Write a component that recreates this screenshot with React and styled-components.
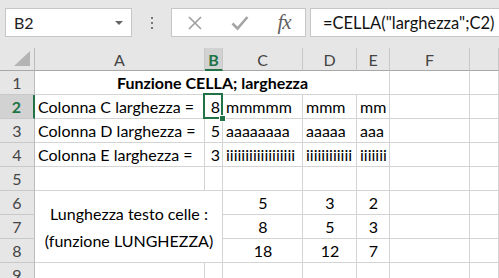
import React from "react";
import styled, { createGlobalStyle } from "styled-components";

const GlobalStyle = createGlobalStyle`
  html, body {
    margin: 0;
    padding: 0;
    background: #ffffff;
  }
  body {
    font-family: Lato, "Liberation Sans", sans-serif;
  }
`;

const Window = styled.div`
  width: 499px;
  height: 278px;
  overflow: hidden;
  background: #ffffff;
  display: flex;
  flex-direction: column;
`;

const FormulaBar = styled.div`
  height: 48px;
  flex: none;
  box-sizing: border-box;
  background: #e6e6e6;
  display: flex;
  align-items: center;
  padding-left: 5px;
  padding-bottom: 3px;
`;

const Box = styled.div`
  height: 29px;
  box-sizing: border-box;
  background: #ffffff;
  border: 1px solid #c6c6c6;
  display: flex;
  align-items: center;
`;

const NameBox = styled(Box)`
  width: 127px;
  padding: 0 8px 0 8px;
  justify-content: space-between;
  font-size: 16px;
  color: #222;
`;

const Caret = styled.span`
  width: 0;
  height: 0;
  border-left: 4px solid transparent;
  border-right: 4px solid transparent;
  border-top: 4px solid #666;
`;

const Dots = styled.div`
  width: 39px;
  display: flex;
  flex-direction: column;
  align-items: center;
  gap: 3px;
  span {
    width: 2px;
    height: 2px;
    background: #777;
  }
`;

const ButtonBox = styled(Box)`
  width: 135px;
  padding-left: 15px;
`;

const IconSlot = styled.div`
  width: ${p => p.$w}px;
  display: flex;
  justify-content: center;
  align-items: center;
`;

const Fx = styled.span`
  font-family: "Liberation Serif", serif;
  font-style: italic;
  font-size: 21px;
  color: #5f5f5f;
  letter-spacing: -1px;
`;

const FormulaInput = styled(Box)`
  flex: 1;
  margin-left: 4px;
  margin-right: -10px;
  padding-left: 12px;
  font-size: 16.5px;
  color: #111;
  white-space: nowrap;
`;

const Sheet = styled.div`
  display: grid;
  grid-template-columns: 35px 170px 18px 80px 54px 33px 80px 29px;
  grid-template-rows: 23px repeat(9, 24px);
  font-size: 16px;
  color: #000;
`;

const Corner = styled.div`
  background: #e6e6e6;
  border-right: 1px solid #bcbcbc;
  border-bottom: 1px solid #a8a8a8;
  display: flex;
  align-items: flex-end;
  justify-content: flex-end;
  padding: 0 4px 4px 0;
`;

const ColHead = styled.div`
  box-sizing: border-box;
  background: ${p => (p.$selected ? "#d2d2d2" : "#e6e6e6")};
  color: ${p => (p.$selected ? "#217346" : "#444")};
  font-weight: ${p => (p.$selected ? 700 : 400)};
  border-right: 1px solid #c8c8c8;
  border-bottom: ${p => (p.$selected ? "2px solid #217346" : "1px solid #a8a8a8")};
  display: flex;
  align-items: center;
  justify-content: center;
  font-size: 16px;
  padding-top: 1px;
`;

const RowHead = styled.div`
  box-sizing: border-box;
  background: ${p => (p.$selected ? "#d2d2d2" : "#e6e6e6")};
  color: ${p => (p.$selected ? "#217346" : "#444")};
  font-weight: ${p => (p.$selected ? 700 : 400)};
  border-right: ${p => (p.$selected ? "2px solid #217346" : "1px solid #bcbcbc")};
  border-bottom: 1px solid #c8c8c8;
  display: flex;
  align-items: center;
  justify-content: center;
  font-size: 16px;
`;

const Cell = styled.div`
  box-sizing: border-box;
  position: relative;
  grid-column: span ${p => p.$cols || 1};
  grid-row: span ${p => p.$rows || 1};
  border-right: 1px solid #d4d4d4;
  border-bottom: 1px solid #d4d4d4;
  display: flex;
  flex-direction: column;
  align-items: ${p =>
    p.$align === "right" ? "flex-end" : p.$align === "center" ? "center" : "flex-start"};
  justify-content: center;
  text-align: ${p => p.$align || "left"};
  font-weight: ${p => (p.$bold ? 700 : 400)};
  padding: 0 2px 0 3px;
  white-space: nowrap;
  line-height: ${p => (p.$rows ? "27px" : "normal")};

  ${p =>
    p.$active &&
    `
    &::after {
      content: "";
      position: absolute;
      left: -2px;
      top: -2px;
      right: -1px;
      bottom: -1px;
      border: 2px solid #217346;
      z-index: 2;
    }
    &::before {
      content: "";
      position: absolute;
      right: -4px;
      bottom: -4px;
      width: 5px;
      height: 5px;
      background: #217346;
      border: 1px solid #fff;
      z-index: 3;
    }
  `}
`;

// the last column is only partly in view, so its letter is not shown
const columns = ["A", "B", "C", "D", "E", "F", ""];

function CrossIcon() {
  return (
    <svg width="16" height="16" viewBox="0 0 16 16">
      <path d="M2 2 L14 14 M14 2 L2 14" stroke="#9e9e9e" strokeWidth="1.6" fill="none" />
    </svg>
  );
}

function CheckIcon() {
  return (
    <svg width="18" height="16" viewBox="0 0 18 16">
      <path d="M1.5 8.5 L6.5 13.5 L16.5 2" stroke="#a4a4a4" strokeWidth="2.6" fill="none" />
    </svg>
  );
}

const Triangle = () => (
  <svg width="16" height="15" viewBox="0 0 16 15">
    <polygon points="16,0 16,15 0,15" fill="#b4b4b4" />
  </svg>
);

const data = [
  ["Colonna C larghezza =", "8", "mmmmm", "mmm", "mm"],
  ["Colonna D larghezza =", "5", "aaaaaaaa", "aaaaa", "aaa"],
  ["Colonna E larghezza =", "3", "iiiiiiiiiiiiiiiiii", "iiiiiiiiiiii", "iiiiiii"],
];

const lengths = [
  ["5", "3", "2"],
  ["8", "5", "3"],
  ["18", "12", "7"],
];

export default function App() {
  return (
    <Window>
      <GlobalStyle />
      <FormulaBar>
        <NameBox>
          <span>B2</span>
          <Caret />
        </NameBox>
        <Dots>
          <span />
          <span />
          <span />
        </Dots>
        <ButtonBox>
          <IconSlot $w={16}>
            <CrossIcon />
          </IconSlot>
          <IconSlot $w={28} />
          <IconSlot $w={18}>
            <CheckIcon />
          </IconSlot>
          <IconSlot $w={24} />
          <IconSlot $w={22}>
            <Fx>fx</Fx>
          </IconSlot>
        </ButtonBox>
        <FormulaInput>=CELLA("larghezza";C2)</FormulaInput>
      </FormulaBar>

      <Sheet>
        <Corner>
          <Triangle />
        </Corner>
        {columns.map((c, i) => (
          <ColHead key={i} $selected={c === "B"}>
            {c}
          </ColHead>
        ))}

        <RowHead>1</RowHead>
        <Cell $cols={5} $align="center" $bold>
          Funzione CELLA; larghezza
        </Cell>
        <Cell />
        <Cell />

        {data.map((r, i) => (
          <React.Fragment key={i}>
            <RowHead $selected={i === 0}>{i + 2}</RowHead>
            <Cell>{r[0]}</Cell>
            <Cell $align="right" $active={i === 0}>
              {r[1]}
            </Cell>
            <Cell>{r[2]}</Cell>
            <Cell>{r[3]}</Cell>
            <Cell>{r[4]}</Cell>
            <Cell />
            <Cell />
          </React.Fragment>
        ))}

        <RowHead>5</RowHead>
        {columns.map((c, i) => (
          <Cell key={i} />
        ))}

        {lengths.map((r, i) => (
          <React.Fragment key={i}>
            <RowHead>{i + 6}</RowHead>
            {i === 0 && (
              <Cell $cols={2} $rows={3} $align="center">
                <span>Lunghezza testo celle :</span>
                <span>(funzione LUNGHEZZA)</span>
              </Cell>
            )}
            {r.map((v, j) => (
              <Cell key={j} $align="center">
                {v}
              </Cell>
            ))}
            <Cell />
            <Cell />
          </React.Fragment>
        ))}

        <RowHead>9</RowHead>
        {columns.map((c, i) => (
          <Cell key={i} />
        ))}
      </Sheet>
    </Window>
  );
}
